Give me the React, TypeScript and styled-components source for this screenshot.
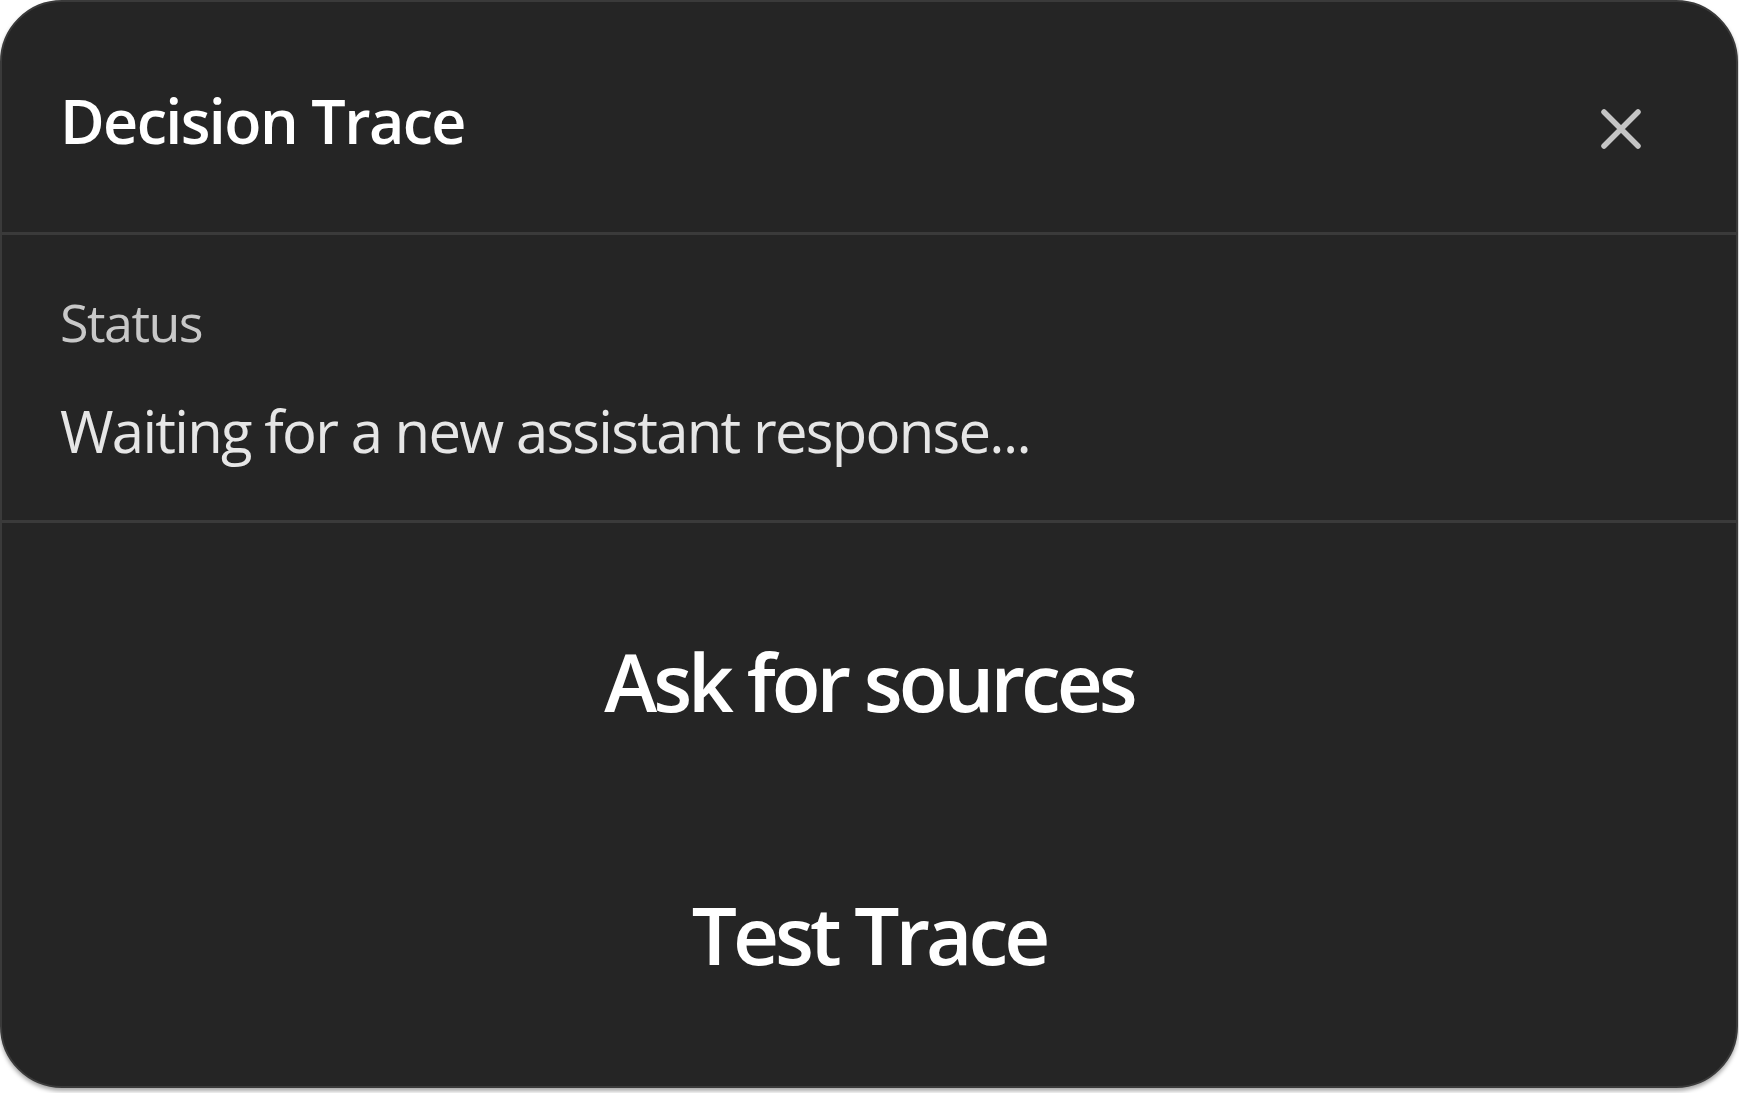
import styled, { createGlobalStyle } from "styled-components";

const GlobalStyle = createGlobalStyle`
  html, body {
    margin: 0;
    padding: 0;
    background: #ffffff;
  }
  * {
    box-sizing: border-box;
  }
`;

const Page = styled.div`
  width: 1739px;
  height: 1093px;
  padding: 0 1px 5px 0;
  font-family: "Open Sans", "Noto Sans", sans-serif;
`;

const Panel = styled.div`
  height: 100%;
  display: flex;
  flex-direction: column;
  background: #252525;
  border: 2px solid #3a3a3a;
  border-radius: 62px;
  box-shadow: 0 3px 4px rgba(0, 0, 0, 0.35);
  overflow: hidden;
`;

const Header = styled.header`
  height: 233px;
  flex-shrink: 0;
  display: flex;
  align-items: flex-start;
  justify-content: space-between;
  padding: 0 93px 0 58px;
  border-bottom: 3px solid #3a3a3a;
`;

const Title = styled.h1`
  margin: 88px 0 0;
  font-size: 61px;
  line-height: 1;
  font-weight: 600;
  letter-spacing: -1.6px;
  color: #ffffff;
`;

const CloseButton = styled.button`
  margin-top: 105px;
  width: 44px;
  height: 44px;
  padding: 0;
  border: none;
  background: transparent;
  display: flex;
  align-items: center;
  justify-content: center;
  cursor: pointer;
`;

const Section = styled.section`
  height: 288px;
  flex-shrink: 0;
  padding: 0 58px;
  border-bottom: 3px solid #3a3a3a;
`;

const Label = styled.div`
  margin-top: 61px;
  font-size: 52px;
  line-height: 1;
  color: #c8c8c8;
  letter-spacing: -1.5px;
`;

const Value = styled.div`
  margin-top: 54px;
  font-size: 58px;
  line-height: 1;
  color: #e6e6e6;
  letter-spacing: -1.7px;
`;

const Actions = styled.div`
  flex: 1;
  display: flex;
  flex-direction: column;
  align-items: center;
  gap: 157px;
  padding-top: 110px;
`;

const ActionButton = styled.button`
  padding: 0;
  border: none;
  background: transparent;
  font-family: inherit;
  font-size: 80px;
  line-height: 1.2;
  font-weight: 600;
  letter-spacing: -4px;
  color: #ffffff;
  cursor: pointer;
`;

function CloseIcon() {
  return (
    <svg width="42" height="42" viewBox="0 0 42 42" fill="none">
      <path
        d="M4 4 L38 38 M38 4 L4 38"
        stroke="#c4c4c4"
        strokeWidth="5.5"
        strokeLinecap="round"
      />
    </svg>
  );
}

export default function App() {
  return (
    <Page>
      <GlobalStyle />
      <Panel>
        <Header>
          <Title>Decision Trace</Title>
          <CloseButton aria-label="Close">
            <CloseIcon />
          </CloseButton>
        </Header>
        <Section>
          <Label>Status</Label>
          <Value>Waiting for a new assistant response...</Value>
        </Section>
        <Actions>
          <ActionButton>Ask for sources</ActionButton>
          <ActionButton>Test Trace</ActionButton>
        </Actions>
      </Panel>
    </Page>
  );
}
